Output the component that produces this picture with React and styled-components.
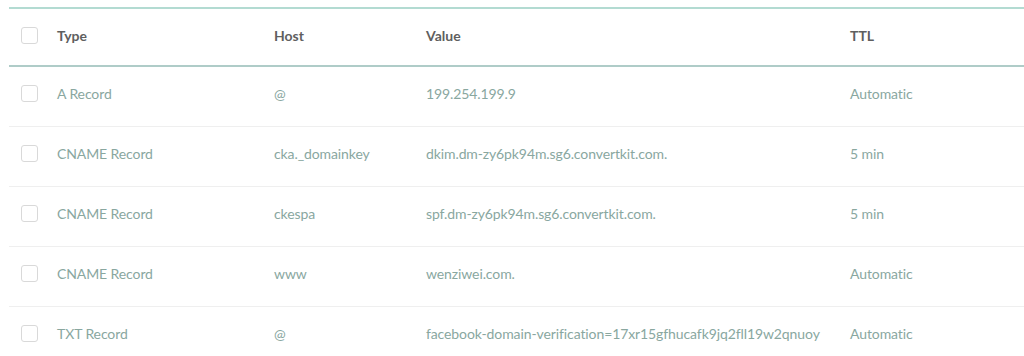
import styled, { createGlobalStyle } from "styled-components";

const GlobalStyle = createGlobalStyle`
  body {
    margin: 0;
    background: #fff;
    font-family: Lato, "Open Sans", sans-serif;
  }
`;

const records = [
  { type: "A Record", host: "@", value: "199.254.199.9", ttl: "Automatic" },
  { type: "CNAME Record", host: "cka._domainkey", value: "dkim.dm-zy6pk94m.sg6.convertkit.com.", ttl: "5 min" },
  { type: "CNAME Record", host: "ckespa", value: "spf.dm-zy6pk94m.sg6.convertkit.com.", ttl: "5 min" },
  { type: "CNAME Record", host: "www", value: "wenziwei.com.", ttl: "Automatic" },
  { type: "TXT Record", host: "@", value: "facebook-domain-verification=17xr15gfhucafk9jq2fll19w2qnuoy", ttl: "Automatic" },
];

const Table = styled.div`
  margin: 7px 0 0 9px;
  border-top: 2px solid #b3dbd2;
`;

// header row is a bit shorter and has the heavier teal rule under it
const Row = styled.div`
  display: grid;
  grid-template-columns: 48px 217px 152px 424px 1fr;
  align-items: center;
  box-sizing: border-box;
  height: ${(p) => (p.$head ? "58px" : "60px")};
  padding-bottom: ${(p) => (p.$head ? "3px" : "6px")};
  border-bottom: ${(p) => (p.$head ? "2px solid #afccc8" : "1px solid #efefef")};
`;

const Cell = styled.div`
  font-size: 14px;
  white-space: nowrap;
  letter-spacing: ${(p) => (p.$head ? "0" : "-0.1px")};
  color: ${(p) => (p.$head ? "#5f5f5f" : "#89a79f")};
  font-weight: ${(p) => (p.$head ? 700 : 400)};
`;

const Check = styled.span`
  display: block;
  width: 15px;
  height: 15px;
  margin-left: 12px;
  border: 1px solid #d9d9d9;
  border-radius: 3px;
  background: #fff;
`;

const App = () => {
  return (
    <>
      <GlobalStyle />
      <Table>
        <Row $head>
          <Check />
          <Cell $head>Type</Cell>
          <Cell $head>Host</Cell>
          <Cell $head>Value</Cell>
          <Cell $head>TTL</Cell>
        </Row>
        {records.map((r, i) => (
          <Row key={i}>
            <Check />
            <Cell>{r.type}</Cell>
            <Cell>{r.host}</Cell>
            <Cell>{r.value}</Cell>
            <Cell>{r.ttl}</Cell>
          </Row>
        ))}
      </Table>
    </>
  );
};

export default App;
